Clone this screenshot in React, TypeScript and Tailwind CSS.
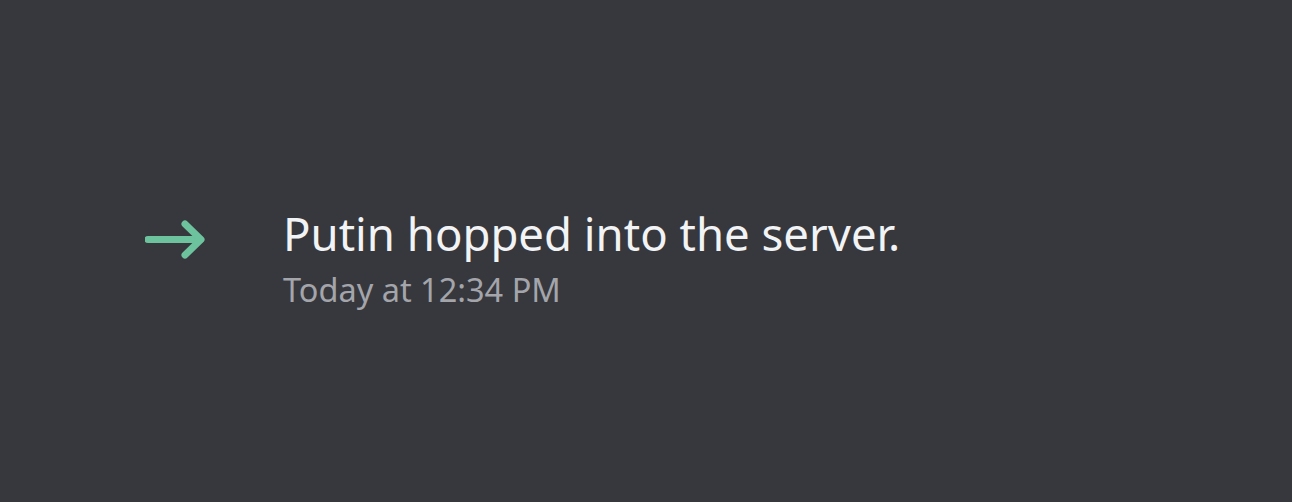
export default function App() {
  return (
    <div className="w-[1292px] h-[502px] bg-[#37383d] flex flex-col justify-start pt-[203px] pl-[145px] font-['Noto_Sans',sans-serif]">
      <div className="flex items-start">
        <div className="w-[60px] h-[40px] mt-[17px] shrink-0">
          <svg width="60" height="40" viewBox="0 0 60 40" fill="none">
            <path d="M3 19.5 H55" stroke="#6cc39e" strokeWidth="7" strokeLinecap="round" />
            <path d="M40 4 L56 19.5 L40 35" stroke="#6cc39e" strokeWidth="7" strokeLinecap="round" strokeLinejoin="round" />
          </svg>
        </div>
        <div className="ml-[78px] flex flex-col">
          <div className="text-[45.5px] leading-[60px] text-[#f2f3f5]">
            Putin hopped into the server.
          </div>
          <div className="text-[32.5px] leading-[40px] text-[#a3a5ab] mt-[7px]">
            Today at 12:34 PM
          </div>
        </div>
      </div>
    </div>
  )
}
